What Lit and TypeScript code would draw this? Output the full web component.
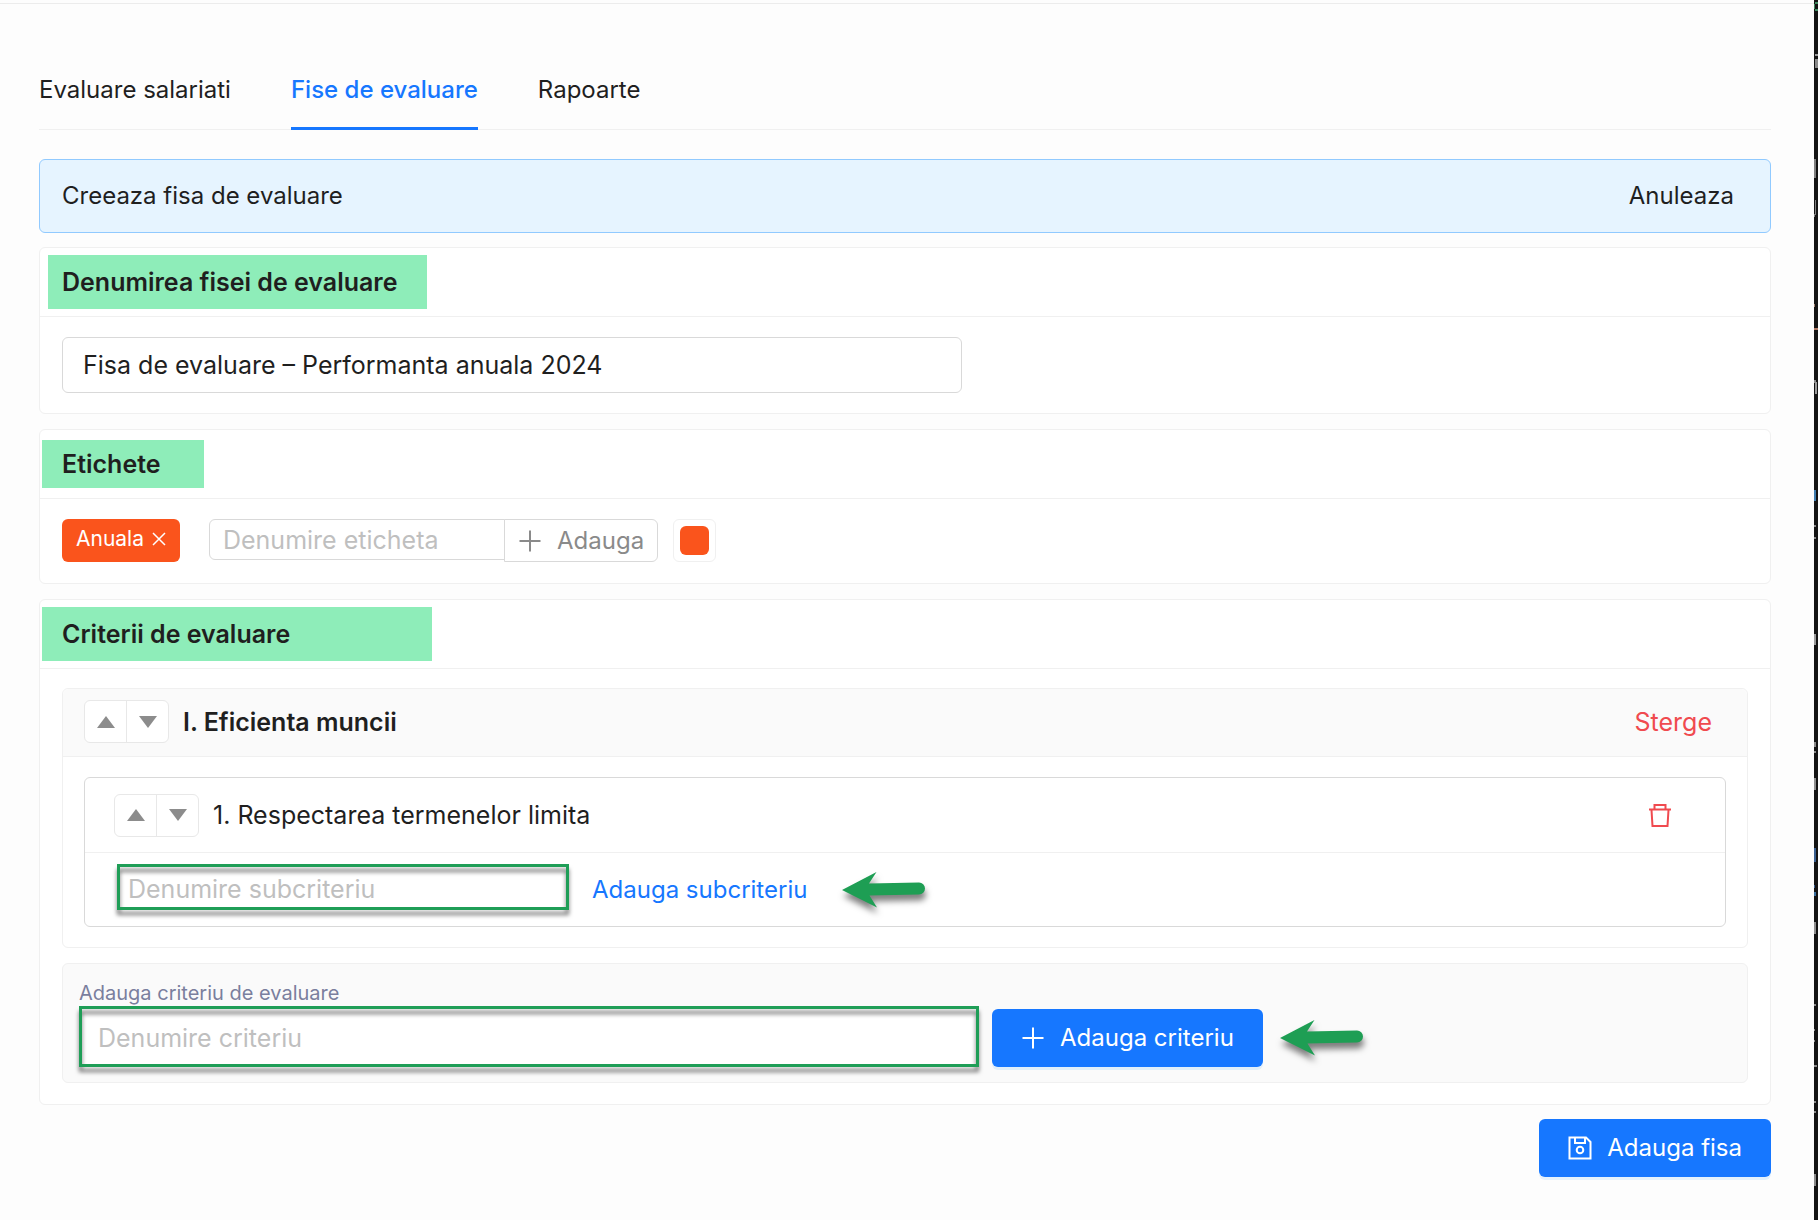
import { LitElement, html, svg, css } from "lit";
import { customElement } from "lit/decorators.js";

const plus = html`<svg class="icon" viewBox="0 0 24 24" aria-hidden="true"><path d="M12 1.500v21M1.500 12h21" fill="none" stroke="currentColor" stroke-width="2" /></svg>`;

const arrow = html`<svg class="arrow" viewBox="0 0 86 36" aria-hidden="true">
  <path d="M1 18 L35.500 0 L28 11.500 L78 10.500 A6 6 0 0 1 78 22.500 L28.500 23.500 L36 35.500 Z" fill="#1e9e54" />
</svg>`;

/** Slivers of the editor window visible past the right edge: [y, height, x, width, colour]. */
const slivers: [number, number, number, number, string][] = [
  [2, 2, 1, 3, "#3f8a60"], [4, 5, 0, 1, "#3f8a60"], [9, 2, 1, 3, "#3f8a60"],
  [54, 2, 1, 3, "#9a9a9a"], [59, 9, 1, 3, "#8a8a8a"], [159, 19, 0, 2, "#808080"],
  [200, 15, 1, 1, "#808080"], [214, 3, 0, 1, "#808080"], [304, 3, 0, 1, "#a08070"], [328, 2, 0, 4, "#b07a66"],
  [380, 3, 0, 2, "#8a8a8a"], [382, 12, 1, 2, "#9a9a9a"], [490, 11, 0, 2, "#3f7cae"],
  [525, 2, 0, 2, "#8a8a8a"], [537, 2, 0, 2, "#8a8a8a"], [634, 11, 0, 2, "#9a9a9a"],
  [742, 5, 0, 2, "#8a8a8a"], [751, 2, 0, 2, "#8a8a8a"], [778, 12, 0, 2, "#8f8f8f"],
  [848, 14, 0, 2, "#3a5f8f"], [885, 3, 0, 1, "#3a5f8f"], [892, 4, 0, 2, "#3a6f9f"],
  [922, 12, 0, 2, "#8f8f8f"], [1004, 2, 0, 2, "#8a8a8a"], [1029, 2, 0, 1, "#8a8a8a"],
  [1040, 2, 0, 1, "#8a8a8a"], [1065, 2, 0, 3, "#8a8a8a"], [1101, 2, 0, 2, "#8a8a8a"],
  [1111, 2, 0, 2, "#8a8a8a"], [1174, 12, 0, 2, "#8a8a8a"],
];

@customElement("app-root")
export class AppRoot extends LitElement {
  static styles = css`
    :host { display: block; font-family: Inter, "Liberation Sans", sans-serif; font-size: 24px; line-height: 36px; color: #1f1f1f; }
    * { box-sizing: border-box; }
    .shell { display: flex; min-height: 100vh; background: #fdfdfd; }
    .page { flex: 1; min-width: 0; margin-top: 3px; border-top: 1px solid #ececec; padding: 68px 43px 42px 39px; }
    .edge { width: 4px; background: #141414; position: relative; overflow: hidden; }
    .edge svg { position: absolute; top: 0; left: 0; width: 4px; height: 1220px; }
    button, input { font: inherit; color: inherit; margin: 0; }
    button { border: 0; background: none; padding: 0; cursor: pointer; }
    input { background: #fff; border: 1px solid #d9d9d9; border-radius: 6px; outline: 0; min-width: 0; font-size: 25px; }
    input::placeholder { color: #bfbfbf; opacity: 1; }
    .tabs { display: flex; gap: 60px; border-bottom: 1px solid #f0f0f0; }
    .tab { color: inherit; text-decoration: none; padding-bottom: 19px; border-bottom: 3px solid transparent; margin-bottom: -1px; }
    .tab.on { color: #1677ff; border-color: #1677ff; font-weight: 500; }
    .banner { display: flex; align-items: center; justify-content: space-between; height: 74px; margin-top: 29px; padding: 0 36px 0 22px; background: #e6f4ff; border: 1px solid #91caff; border-radius: 6px; }
    .card { margin-top: 14px; background: #fff; border: 1px solid #f0f0f0; border-radius: 6px; }
    .card + .card { margin-top: 15px; }
    .head { display: flex; align-items: center; height: 69px; border-bottom: 1px solid #f0f0f0; }
    h2, h3, h4 { margin: 0; font-size: 25px; line-height: 36px; font-weight: 600; }
    h4 { font-weight: 400; }
    .mark { background: #8eedb9; padding: 9px 29px 9px 14px; margin-left: 8px; }
    .mark.short { padding: 6px 43px 6px 20px; margin-left: 2px; }
    .mark.long { padding: 9px 142px 9px 20px; margin-left: 2px; }
    .name { padding: 20px 22px; }
    .name input { display: block; width: 100%; max-width: 900px; height: 56px; padding: 0 20px; }
    .labels { display: flex; align-items: center; padding: 20px 22px 21px; }
    .tag { display: flex; align-items: center; gap: 8px; height: 43px; padding: 0 14px 3px; margin-right: 29px; background: #fa541c; border-radius: 6px; color: #fff; font-size: 21px; }
    .tag svg { display: block; width: 14px; height: 14px; }
    .labels input { width: 296px; height: 41px; padding: 0 13px; border-radius: 6px 0 0 6px; align-self: flex-start; }
    .add { display: flex; align-items: center; gap: 15px; height: 43px; margin-left: -1px; padding: 0 13px; border: 1px solid #d9d9d9; border-radius: 0 6px 6px 0; background: #fff; color: #8a8a8a; }
    .icon { width: 24px; height: 24px; display: block; }
    .picker { width: 43px; height: 43px; margin-left: 15px; padding: 6px; border: 1px solid #f0f0f0; border-radius: 6px; background: #fff; }
    .picker span { display: block; height: 29px; border-radius: 6px; background: #fa541c; }
    .criteria { padding: 19px 22px 21px; }
    .panel { border: 1px solid #f0f0f0; border-radius: 6px; }
    .panel .head { justify-content: space-between; height: 68px; padding: 0 35px 2px 21px; background: #fafafa; border-radius: 6px 6px 0 0; }
    .title { display: flex; align-items: center; gap: 14px; }
    .order { display: flex; border: 1px solid #e8e8e8; border-radius: 6px; background: #fff; width: 85px; height: 43px; }
    .order button { flex: 1; display: grid; place-items: center; }
    .order button + button { border-left: 1px solid #e8e8e8; }
    .order svg { width: 18px; height: 12px; display: block; fill: #8c8c8c; }
    .danger { color: #f04a4f; display: block; font-size: 25px; }
    .sub { margin: 20px 21px; border: 1px solid #d9d9d9; border-radius: 6px; }
    .subhead { display: flex; align-items: center; justify-content: space-between; height: 75px; padding: 0 53px 0 29px; border-bottom: 1px solid #f0f0f0; }
    .subadd { display: flex; align-items: center; height: 73px; padding: 0 29px; }
    .marked { position: relative; display: block; }
    .marked::after { content: ""; position: absolute; inset: 0; border: 3px solid #1f9e57; pointer-events: none; filter: drop-shadow(0 5px 2px rgba(0, 0, 0, 0.55)); }
    .marked input { display: block; width: 100%; }
    .marked.small { width: 452px; margin: 0 23px 6px 3px; }
    .marked.small input { height: 46px; padding: 5px 10px 0; }
    .link { color: #1677ff; margin-right: 34px; }
    .arrow { width: 86px; height: 36px; flex: none; overflow: visible; filter: drop-shadow(1px 6px 3px rgba(0, 0, 0, 0.5)); }
    .new { margin-top: 15px; height: 120px; padding: 16px; background: #fafafa; }
    .new label { display: block; font-size: 20px; line-height: 26px; color: #7a7f9e; }
    .newrow { display: flex; align-items: flex-end; }
    .newrow .marked { flex: 0 1 900px; margin-right: 13px; }
    .newrow input { height: 61px; padding: 3px 18px 0; border-radius: 0; }
    .action { display: flex; align-items: center; gap: 16px; }
    .primary { display: flex; align-items: center; gap: 15px; height: 58px; padding: 0 29px; background: #1677ff; color: #fff; border-radius: 6px; box-shadow: 0 3px 0 rgba(5, 145, 255, 0.1); }
    .foot { display: flex; justify-content: flex-end; margin-top: 14px; }
  `;

  private order(name: string) {
    return html`<span class="order">
      <button aria-label="Muta in sus ${name}"><svg viewBox="0 0 18 12"><path d="M9 0 18 12H0Z" /></svg></button>
      <button aria-label="Muta in jos ${name}"><svg viewBox="0 0 18 12"><path d="M0 0H18L9 12Z" /></svg></button>
    </span>`;
  }

  render() {
    return html`<div class="shell">
      <main class="page">
        <nav class="tabs">
          <a class="tab" href="#salariati">Evaluare salariati</a>
          <a class="tab on" href="#fise" aria-current="page">Fise de evaluare</a>
          <a class="tab" href="#rapoarte">Rapoarte</a>
        </nav>
        <div class="banner"><span>Creeaza fisa de evaluare</span><button>Anuleaza</button></div>

        <section class="card">
          <div class="head"><h2 class="mark">Denumirea fisei de evaluare</h2></div>
          <div class="name"><input aria-label="Denumirea fisei de evaluare" .value=${"Fisa de evaluare – Performanta anuala 2024"} /></div>
        </section>

        <section class="card">
          <div class="head"><h2 class="mark short">Etichete</h2></div>
          <div class="labels">
            <span class="tag">Anuala<button aria-label="Sterge eticheta"><svg viewBox="0 0 14 14"><path d="M1 1 13 13M13 1 1 13" stroke="#fff" stroke-width="1.500" /></svg></button></span>
            <input placeholder="Denumire eticheta" aria-label="Denumire eticheta" />
            <button class="add">${plus}Adauga</button>
            <button class="picker" aria-label="Culoare"><span></span></button>
          </div>
        </section>

        <section class="card">
          <div class="head"><h2 class="mark long">Criterii de evaluare</h2></div>
          <div class="criteria">
            <section class="panel">
              <div class="head">
                <div class="title">${this.order("criteriul")}<h3>I. Eficienta muncii</h3></div>
                <button class="danger">Sterge</button>
              </div>
              <div class="sub">
                <div class="subhead">
                  <div class="title">${this.order("subcriteriul")}<h4>1. Respectarea termenelor limita</h4></div>
                  <button class="danger" aria-label="Sterge subcriteriul">
                    <svg class="icon" viewBox="0 0 24 24" fill="none" stroke="currentColor" stroke-width="2"><path d="M1 6.500H23M6.500 6V2H17.500V6M3.500 7 4.500 23H19.500L20.500 7" /></svg>
                  </button>
                </div>
                <div class="subadd">
                  <span class="marked small"><input placeholder="Denumire subcriteriu" aria-label="Denumire subcriteriu" /></span>
                  <button class="link">Adauga subcriteriu</button>
                  ${arrow}
                </div>
              </div>
            </section>
            <div class="panel new">
              <label for="criteriu">Adauga criteriu de evaluare</label>
              <div class="newrow">
                <span class="marked"><input id="criteriu" placeholder="Denumire criteriu" /></span>
                <div class="action">
                  <button class="primary">${plus}Adauga criteriu</button>
                  ${arrow}
                </div>
              </div>
            </div>
          </div>
        </section>

        <div class="foot">
          <button class="primary">
            <svg class="icon" viewBox="0 0 24 24" fill="none" stroke="currentColor" stroke-width="2"><path d="M1.500 1.500H18L22.500 6V22.500H1.500ZM7 2V7H17V2" /><circle cx="12" cy="14" r="3.300" /></svg>
            Adauga fisa
          </button>
        </div>
      </main>
      <aside class="edge" aria-hidden="true">
        <svg viewBox="0 0 4 1220">${slivers.map(([y, h, x, w, c]) => svg`<rect x=${x} y=${y} width=${w} height=${h} fill=${c} />`)}</svg>
      </aside>
    </div>`;
  }
}
